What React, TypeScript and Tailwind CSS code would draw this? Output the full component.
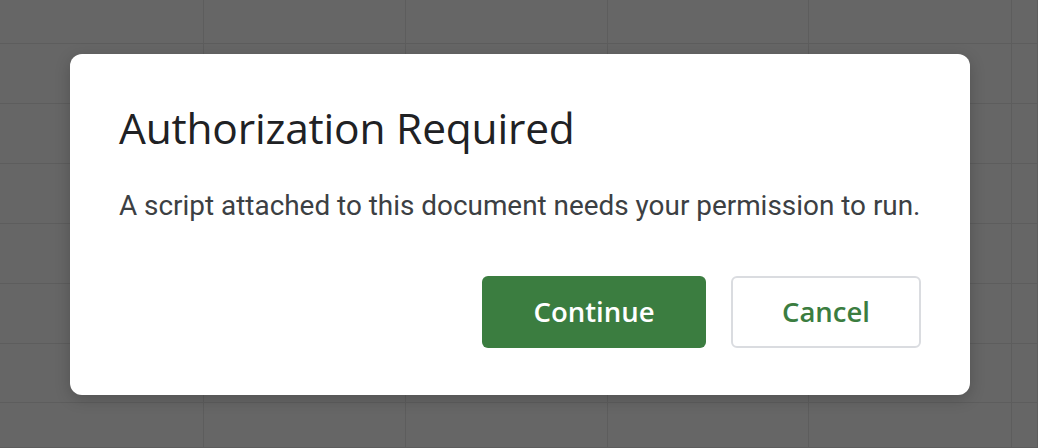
import React from 'react';

const cols = 6;
const rows = 8;

const AuthDialog = () => {
  return (
    <div className="absolute left-[70px] top-[54px] w-[900px] h-[341px] bg-white rounded-[12px] shadow-[0_4px_16px_rgba(0,0,0,0.2)] px-[49px] pt-[48px] flex flex-col">
      <h1 className="text-[42.5px] leading-[52px] text-[#202124] font-['Open_Sans',sans-serif] tracking-[-0.2px]">
        Authorization Required
      </h1>
      <p className="mt-[35px] text-[27.9px] leading-[34px] text-[#3c4043] font-['Roboto',sans-serif]">
        A script attached to this document needs your permission to run.
      </p>
      <div className="mt-auto mb-[47px] flex justify-end gap-[25px]">
        <button className="w-[224px] h-[72px] rounded-[6px] bg-[#3b7d40] text-white text-[27.5px] font-semibold font-['Open_Sans',sans-serif]">
          Continue
        </button>
        <button className="w-[190px] h-[72px] rounded-[6px] border-2 border-[#dadce0] bg-white text-[#3b7d40] text-[27.5px] font-semibold font-['Open_Sans',sans-serif]">
          Cancel
        </button>
      </div>
    </div>
  );
};

const App = () => {
  return (
    <div className="relative w-[1038px] h-[448px] overflow-hidden bg-[#666666]">
      <div className="grid grid-cols-[204px_202px_202px_201px_203px_1fr] grid-rows-[44px_60px_60px_60px_60px_60px_59px_1fr] h-full">
        {Array.from({ length: cols * rows }).map((_, i) => (
          <div key={i} className="border-r border-b border-[#5d5d5d]" />
        ))}
      </div>
      <AuthDialog />
    </div>
  );
};

export default App;
